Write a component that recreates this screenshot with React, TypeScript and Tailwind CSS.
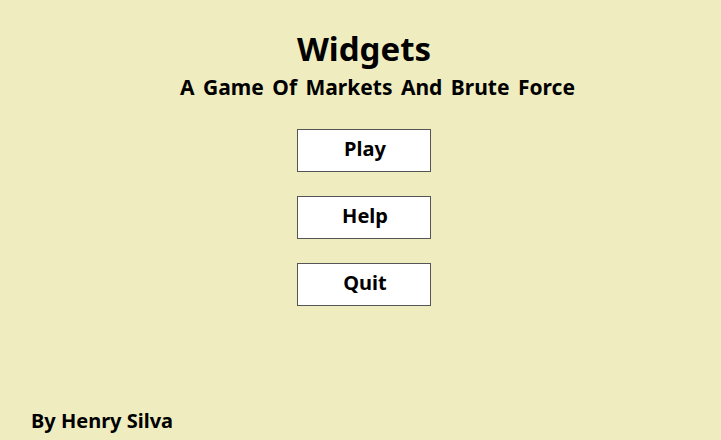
const buttons = ["Play", "Help", "Quit"];

export default function App() {
  return (
    <div
      className="flex h-[440px] w-full flex-col bg-[#efedbf] text-black"
      style={{ fontFamily: '"Noto Sans", "Open Sans", sans-serif' }}
    >
      <div className="flex flex-col items-center pl-[7px] pt-[26px]">
        <h1 className="text-[33px] font-bold leading-[46px]">Widgets</h1>
        <p className="mt-[1px] pl-[27px] text-[21px] font-bold leading-[28px] [word-spacing:3px]">
          A Game Of Markets And Brute Force
        </p>
        <div className="mt-[28px] flex flex-col gap-[24px]">
          {buttons.map((b) => (
            <button
              key={b}
              className="h-[43px] w-[134px] border border-[#555] bg-white pb-[3px] pl-[2px] text-[20px] font-bold leading-none"
            >
              {b}
            </button>
          ))}
        </div>
      </div>
      <div className="mt-auto pb-[5px] pl-[31px] text-[20px] font-bold leading-[28px]">
        By Henry Silva
      </div>
    </div>
  );
}
